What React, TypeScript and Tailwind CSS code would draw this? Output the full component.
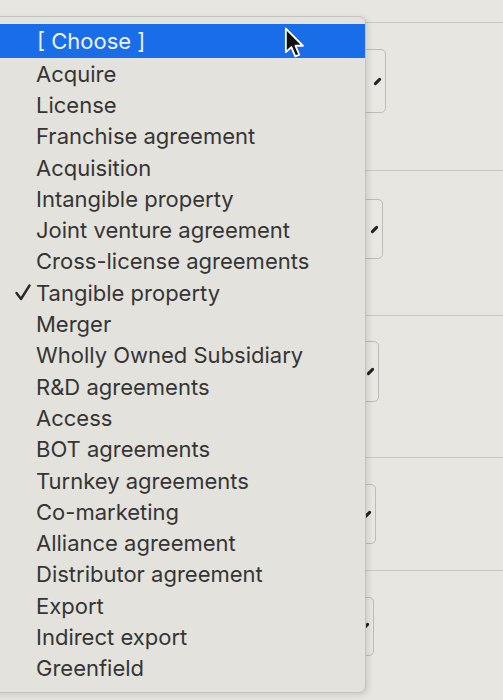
const options = [
  "Acquire",
  "License",
  "Franchise agreement",
  "Acquisition",
  "Intangible property",
  "Joint venture agreement",
  "Cross-license agreements",
  "Tangible property",
  "Merger",
  "Wholly Owned Subsidiary",
  "R&D agreements",
  "Access",
  "BOT agreements",
  "Turnkey agreements",
  "Co-marketing",
  "Alliance agreement",
  "Distributor agreement",
  "Export",
  "Indirect export",
  "Greenfield",
];

const selected = "Tangible property";

// table rows behind the menu: row height, gap above the select, select height, select right edge
const rows = [
  { h: 148, top: 26, sh: 64, right: 386 },
  { h: 145, top: 28, sh: 60, right: 383 },
  { h: 142, top: 25, sh: 61, right: 379 },
  { h: 113, top: 26, sh: 60, right: 376 },
  { h: 130, top: 26, sh: 59, right: 374 },
];

function SelectBox({ top, sh, right }: { top: number; sh: number; right: number }) {
  return (
    <div className="flex pl-[200px]" style={{ paddingTop: top }}>
      <div
        className="flex items-center justify-end rounded-[5px] border border-[#bdbbb5] bg-[#e9e7e2] pr-[6px]"
        style={{ width: right - 200, height: sh }}
      >
        <span className="h-[9px] w-[3px] rotate-[45deg] rounded-full bg-[#222]" />
      </div>
    </div>
  );
}

function Cursor() {
  return (
    <svg width="22" height="32" viewBox="0 0 14 21" className="absolute left-[284px] top-[27px]">
      <path
        d="M1 1 L1 16.5 L4.6 13.2 L7.2 19.3 L9.8 18.2 L7.3 12.3 L12.2 12.3 Z"
        fill="#111"
        stroke="#fff"
        strokeWidth="1.2"
        strokeLinejoin="round"
      />
    </svg>
  );
}

function Check() {
  return (
    <svg width="16" height="17" viewBox="0 0 16 17">
      <path
        d="M1.5 9 L6 15 L14.5 1.5"
        fill="none"
        stroke="#2a2a2a"
        strokeWidth="2.4"
        strokeLinecap="round"
        strokeLinejoin="round"
      />
    </svg>
  );
}

export default function App() {
  return (
    <div className="relative h-[700px] w-[503px] overflow-hidden bg-[#e8e6e1] font-['Inter','Liberation_Sans',sans-serif]">
      {/* form table in background */}
      <div className="flex flex-col pt-[22px]">
        {rows.map((r, i) => (
          <div key={i} className="border-t border-[#c9c7c1]" style={{ height: r.h }}>
            <SelectBox top={r.top} sh={r.sh} right={r.right} />
          </div>
        ))}
      </div>

      {/* open popup menu */}
      <div className="absolute left-[-12px] top-[16px] flex h-[677px] w-[378px] flex-col rounded-[7px] border border-[#c4c2bc] bg-[#e4e2dd] pt-[7px] shadow-[2px_2px_6px_rgba(0,0,0,0.12)]">
        <div className="flex h-[34px] items-center bg-[#1a6de9] pl-[48px] text-[22px] leading-none text-[#eef2fb]">
          [ Choose ]
        </div>
        {options.map((o) => (
          <div
            key={o}
            className="flex h-[31.3px] items-center text-[22px] leading-none text-[#353535]"
          >
            <span className="flex w-[47px] pl-[26px]">{o === selected && <Check />}</span>
            {o}
          </div>
        ))}
      </div>

      <Cursor />
    </div>
  );
}
